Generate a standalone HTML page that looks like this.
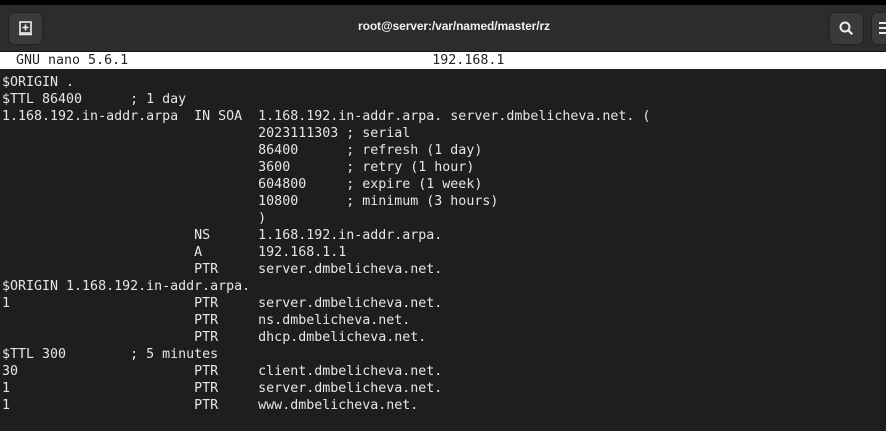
<!DOCTYPE html>
<html><head><meta charset="utf-8"><style>
html,body{margin:0;padding:0;width:886px;height:431px;overflow:hidden;background:#1e1e1e}
.top{position:absolute;left:0;top:0;width:886px;height:5px;background:#000}
.hdr{position:absolute;left:0;top:5px;width:886px;height:46px;background:#2c2c2c;border-bottom:1px solid #151515}
.btn{position:absolute;top:12px;width:33px;height:31px;background:#3a3a3a;border-radius:6px;border:1px solid #222}
.title{position:absolute;left:11px;width:886px;top:19px;text-align:center;color:#f0f0f0;font:bold 12px "Liberation Sans",sans-serif;letter-spacing:-0.1px}
.nano{position:absolute;left:0;top:52px;width:886px;height:17px;background:#fff;color:#222;font:13.3px/17px "DejaVu Sans Mono",monospace;white-space:pre}
pre{position:absolute;left:2px;top:73.5px;margin:0;color:#e6e6e6;font:13.3px/17px "DejaVu Sans Mono",monospace}
</style></head><body>
<div class="top"></div>
<div class="hdr"></div>
<div class="btn" style="left:8px"><svg width="33" height="31" viewBox="0 0 33 31"><rect x="11" y="9" width="11" height="11" fill="none" stroke="#eee" stroke-width="1.6"/><path d="M16.5 11.5v6M13.5 14.5h6M10 21.5h13" stroke="#eee" stroke-width="1.6"/></svg></div>
<div class="title">root@server:/var/named/master/rz</div>
<div class="btn" style="left:829px"><svg width="33" height="31" viewBox="0 0 33 31"><circle cx="15" cy="14" r="4.5" fill="none" stroke="#eee" stroke-width="2"/><path d="M18.3 17.3l4 4" stroke="#eee" stroke-width="2.2"/></svg></div>
<div class="btn" style="left:871px;width:40px"><svg width="20" height="31"><path d="M7 10h10M7 15h10M7 20h10" stroke="#eee" stroke-width="2"/></svg></div>
<div class="nano">  GNU nano 5.6.1                                      192.168.1</div>
<pre>$ORIGIN .
$TTL 86400      ; 1 day
1.168.192.in-addr.arpa  IN SOA  1.168.192.in-addr.arpa. server.dmbelicheva.net. (
                                2023111303 ; serial
                                86400      ; refresh (1 day)
                                3600       ; retry (1 hour)
                                604800     ; expire (1 week)
                                10800      ; minimum (3 hours)
                                )
                        NS      1.168.192.in-addr.arpa.
                        A       192.168.1.1
                        PTR     server.dmbelicheva.net.
$ORIGIN 1.168.192.in-addr.arpa.
1                       PTR     server.dmbelicheva.net.
                        PTR     ns.dmbelicheva.net.
                        PTR     dhcp.dmbelicheva.net.
$TTL 300        ; 5 minutes
30                      PTR     client.dmbelicheva.net.
1                       PTR     server.dmbelicheva.net.
1                       PTR     www.dmbelicheva.net.</pre>
</body></html>
